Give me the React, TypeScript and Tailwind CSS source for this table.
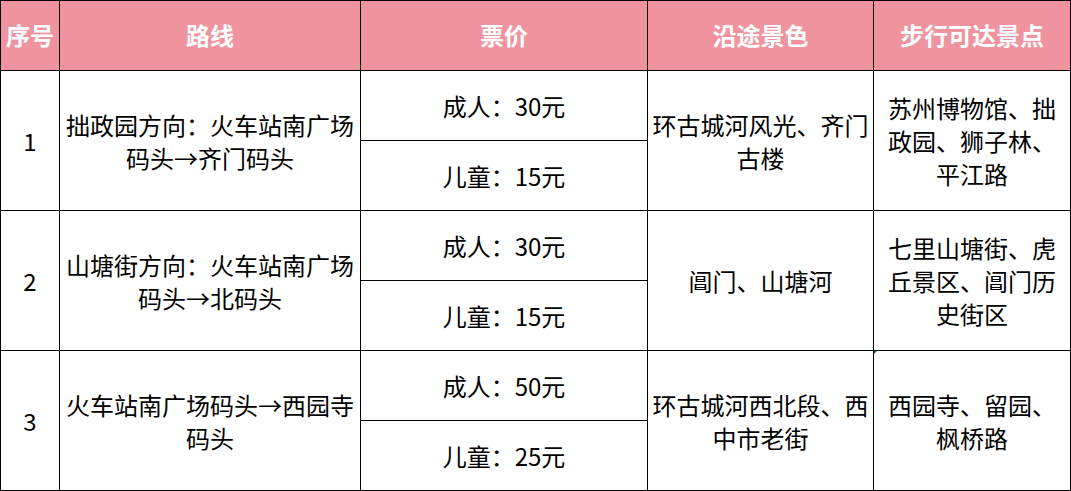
const routes = [
  {
    no: "1",
    route: "拙政园方向：火车站南广场码头→齐门码头",
    adult: "成人：30元",
    child: "儿童：15元",
    scenery: "环古城河风光、齐门古楼",
    sights: "苏州博物馆、拙政园、狮子林、平江路",
  },
  {
    no: "2",
    route: "山塘街方向：火车站南广场码头→北码头",
    adult: "成人：30元",
    child: "儿童：15元",
    scenery: "阊门、山塘河",
    sights: "七里山塘街、虎丘景区、阊门历史街区",
  },
  {
    no: "3",
    route: "火车站南广场码头→西园寺码头",
    adult: "成人：50元",
    child: "儿童：25元",
    scenery: "环古城河西北段、西中市老街",
    sights: "西园寺、留园、枫桥路",
  },
];

const headers = ["序号", "路线", "票价", "沿途景色", "步行可达景点"];

export default function App() {
  return (
    <div
      className="w-[1071px] h-[491px] bg-white"
      style={{ fontFamily: '"Noto Sans CJK SC", "Noto Sans", sans-serif' }}
    >
      <div className="grid grid-cols-[58px_300px_286px_225px_196px] grid-rows-[repeat(7,69px)] gap-px p-px bg-black text-[24px] leading-[33px] text-black">
        {headers.map((h) => (
          <div
            key={h}
            className="bg-[#ef949e] text-white font-bold flex items-center justify-center pb-[2px]"
          >
            {h}
          </div>
        ))}

        {routes.map((r, i) => (
          <Row key={r.no} r={r} marker={i === 2} />
        ))}
      </div>
    </div>
  );
}

function Row({ r, marker }: { r: (typeof routes)[number]; marker: boolean }) {
  const cell = "row-span-2 bg-white flex items-center justify-center text-center px-1";
  return (
    <>
      <div className={cell}>{r.no}</div>
      <div className={cell}>{r.route}</div>
      <div className="bg-white flex items-center justify-center">{r.adult}</div>
      <div className={`${cell} col-start-4`}>{r.scenery}</div>
      <div className={`${cell} col-start-5 relative`}>
        {marker && (
          <span className="absolute top-0 left-0 w-0 h-0 border-t-[3px] border-r-[3px] border-t-[#1f7a1f] border-r-transparent" />
        )}
        {r.sights}
      </div>
      <div className="bg-white flex items-center justify-center col-start-3">{r.child}</div>
    </>
  );
}
